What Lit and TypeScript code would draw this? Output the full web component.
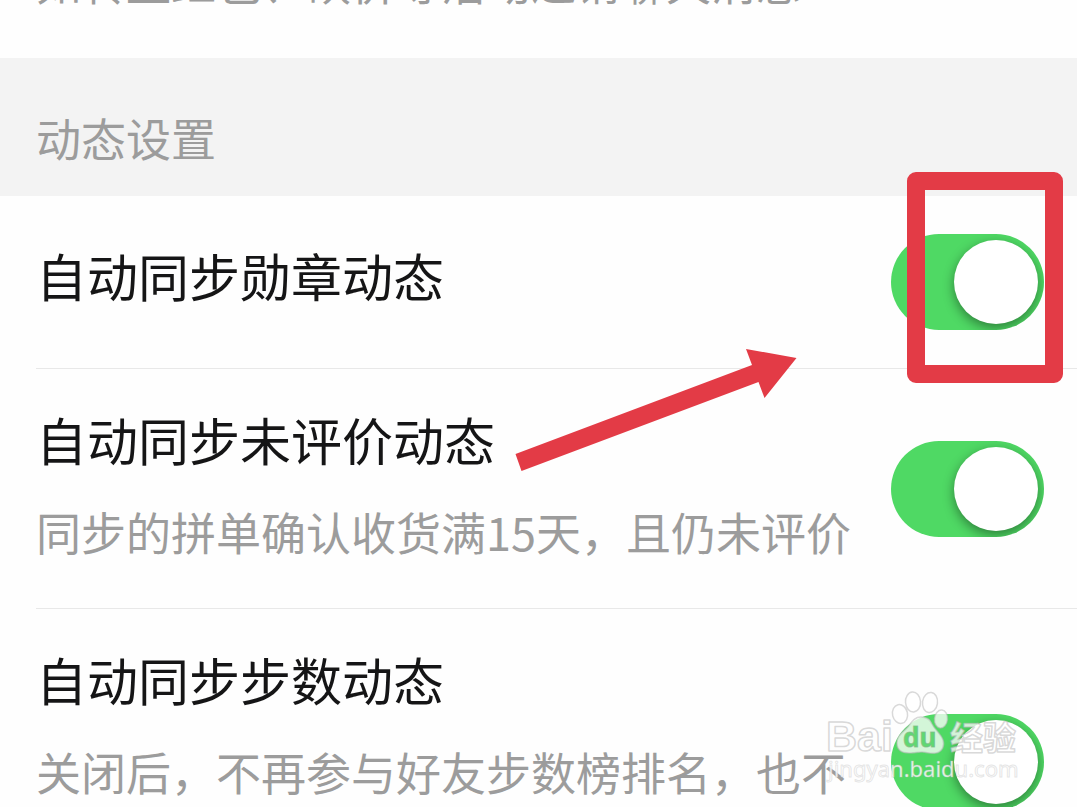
import { LitElement, html, css, nothing } from "lit";
import { customElement, property } from "lit/decorators.js";

@customElement("setting-row")
class SettingRow extends LitElement {
  @property() heading = "";
  @property() note = "";

  static styles = css`
    :host {
      display: block;
      padding-left: 36px;
    }
    .row {
      display: flex;
      align-items: center;
      gap: 36px;
      padding: 38px 33px 38px 0;
      border-bottom: 1px solid #e8e8e8;
    }
    .label {
      display: flex;
      flex-direction: column;
      flex: 1;
      gap: 28px;
      min-width: 0;
      padding-bottom: 14px;
    }
    :host([note]) .label {
      padding-bottom: 5px;
    }
    .title {
      font-size: 51px;
      line-height: 64px;
      color: #151516;
    }
    .note {
      font-size: 45px;
      line-height: 66px;
      color: #9c9c9c;
    }
    .switch {
      appearance: none;
      flex: none;
      display: flex;
      justify-content: flex-end;
      box-sizing: border-box;
      width: 153px;
      height: 96px;
      margin: 0;
      padding: 6px;
      border-radius: 48px;
      background: #d8d8d8;
      overflow: hidden;
    }
    .switch:not(:checked) {
      justify-content: flex-start;
    }
    .switch:checked {
      background: #4fd964;
    }
    .switch::before {
      content: "";
      width: 84px;
      height: 84px;
      border-radius: 50%;
      background: #fff;
      box-shadow: 0 4px 12px rgba(0, 0, 0, 0.42);
    }
  `;

  render() {
    return html`
      <div class="row">
        <label class="label" for="toggle">
          <span class="title">${this.heading}</span>
          ${this.note ? html`<span class="note">${this.note}</span>` : nothing}
        </label>
        <input class="switch" id="toggle" type="checkbox" role="switch" checked />
      </div>
    `;
  }
}

@customElement("app-root")
class AppRoot extends LitElement {
  static styles = css`
    :host {
      display: block;
      position: relative;
      height: 100vh;
      overflow: hidden;
      background: #fefefe;
      font-family: "Noto Sans CJK SC", sans-serif;
    }
    .intro {
      display: flex;
      align-items: flex-end;
      box-sizing: border-box;
      height: 58px;
      padding: 0 36px 43px;
      overflow: hidden;
    }
    .text {
      margin: 0;
      font-size: 45px;
      font-weight: 400;
      line-height: 66px;
      color: #9c9c9c;
      white-space: nowrap;
    }
    .section {
      padding: 47px 36px 25px;
      background: #f3f3f3;
    }
    .frame {
      position: absolute;
      top: 172px;
      right: 14px;
      box-sizing: border-box;
      width: 156px;
      height: 211px;
      border: 18px solid #e33b46;
      border-radius: 9px;
      pointer-events: none;
    }
    .arrow {
      position: absolute;
      top: 340px;
      right: 277px;
      pointer-events: none;
    }
    .watermark {
      position: absolute;
      right: 53px;
      bottom: 17px;
      pointer-events: none;
    }
    .mark {
      fill: rgba(255, 255, 255, 0.75);
      stroke: rgba(185, 185, 185, 0.55);
      stroke-width: 1.5;
      stroke-linejoin: round;
    }
    .latin {
      font-family: "Liberation Sans", sans-serif;
      font-weight: 700;
      font-size: 43px;
    }
    .du {
      font-family: "Noto Sans", sans-serif;
      font-weight: 700;
      font-size: 26px;
      fill: #5fd872;
      stroke: rgba(130, 185, 138, 0.7);
      stroke-width: 1;
    }
    .han {
      font-weight: 700;
      font-size: 33px;
    }
    .site {
      font-family: "Noto Sans", sans-serif;
      font-size: 22px;
      fill: rgba(255, 255, 255, 0.85);
      stroke: rgba(190, 190, 190, 0.4);
      stroke-width: 1;
    }
  `;

  render() {
    return html`
      <div class="intro">
        <p class="text">如转盘红包、砍价等活动邀请聊天消息</p>
      </div>
      <header class="section"><h2 class="text">动态设置</h2></header>
      <setting-row heading="自动同步勋章动态"></setting-row>
      <setting-row
        heading="自动同步未评价动态"
        note="同步的拼单确认收货满15天，且仍未评价"
      ></setting-row>
      <setting-row
        heading="自动同步步数动态"
        note="关闭后，不再参与好友步数榜排名，也不再同步步数动态"
      ></setting-row>

      <div class="frame"></div>
      <svg class="arrow" width="300" height="140" viewBox="0 0 300 140" aria-hidden="true">
        <path
          fill="#e33b46"
          d="M15.500 114L252 25L246 9L296.500 18L264.500 58L258.500 42L21.500 131Z"
        />
      </svg>
      <svg class="watermark" width="200" height="100" viewBox="0 0 200 100">
        <text class="mark latin" x="2" y="61">Bai</text>
        <g class="mark">
          <ellipse cx="76" cy="24" rx="7.500" ry="9.500" transform="rotate(-12 76 24)" />
          <ellipse cx="89" cy="12" rx="7.500" ry="10" transform="rotate(-4 89 12)" />
          <ellipse cx="106" cy="12.500" rx="7.500" ry="10" transform="rotate(8 106 12.500)" />
          <ellipse cx="117" cy="29" rx="6.500" ry="9" transform="rotate(6 117 29)" />
          <path
            d="M97 27C89 27 87 34 83 38C78 43 73 46 73 53C73 60 78 63 85 63C91 63 93 62 98 62C103 62 106 64 112 63C118 62 121 56 119 50C117 44 111 40 108 34C106 29 103 27 97 27Z"
          />
        </g>
        <text class="du" x="79" y="57">du</text>
        <text class="mark han" x="126" y="60">经验</text>
        <text class="site" x="4" y="87">jingyan.baidu.com</text>
      </svg>
    `;
  }
}
